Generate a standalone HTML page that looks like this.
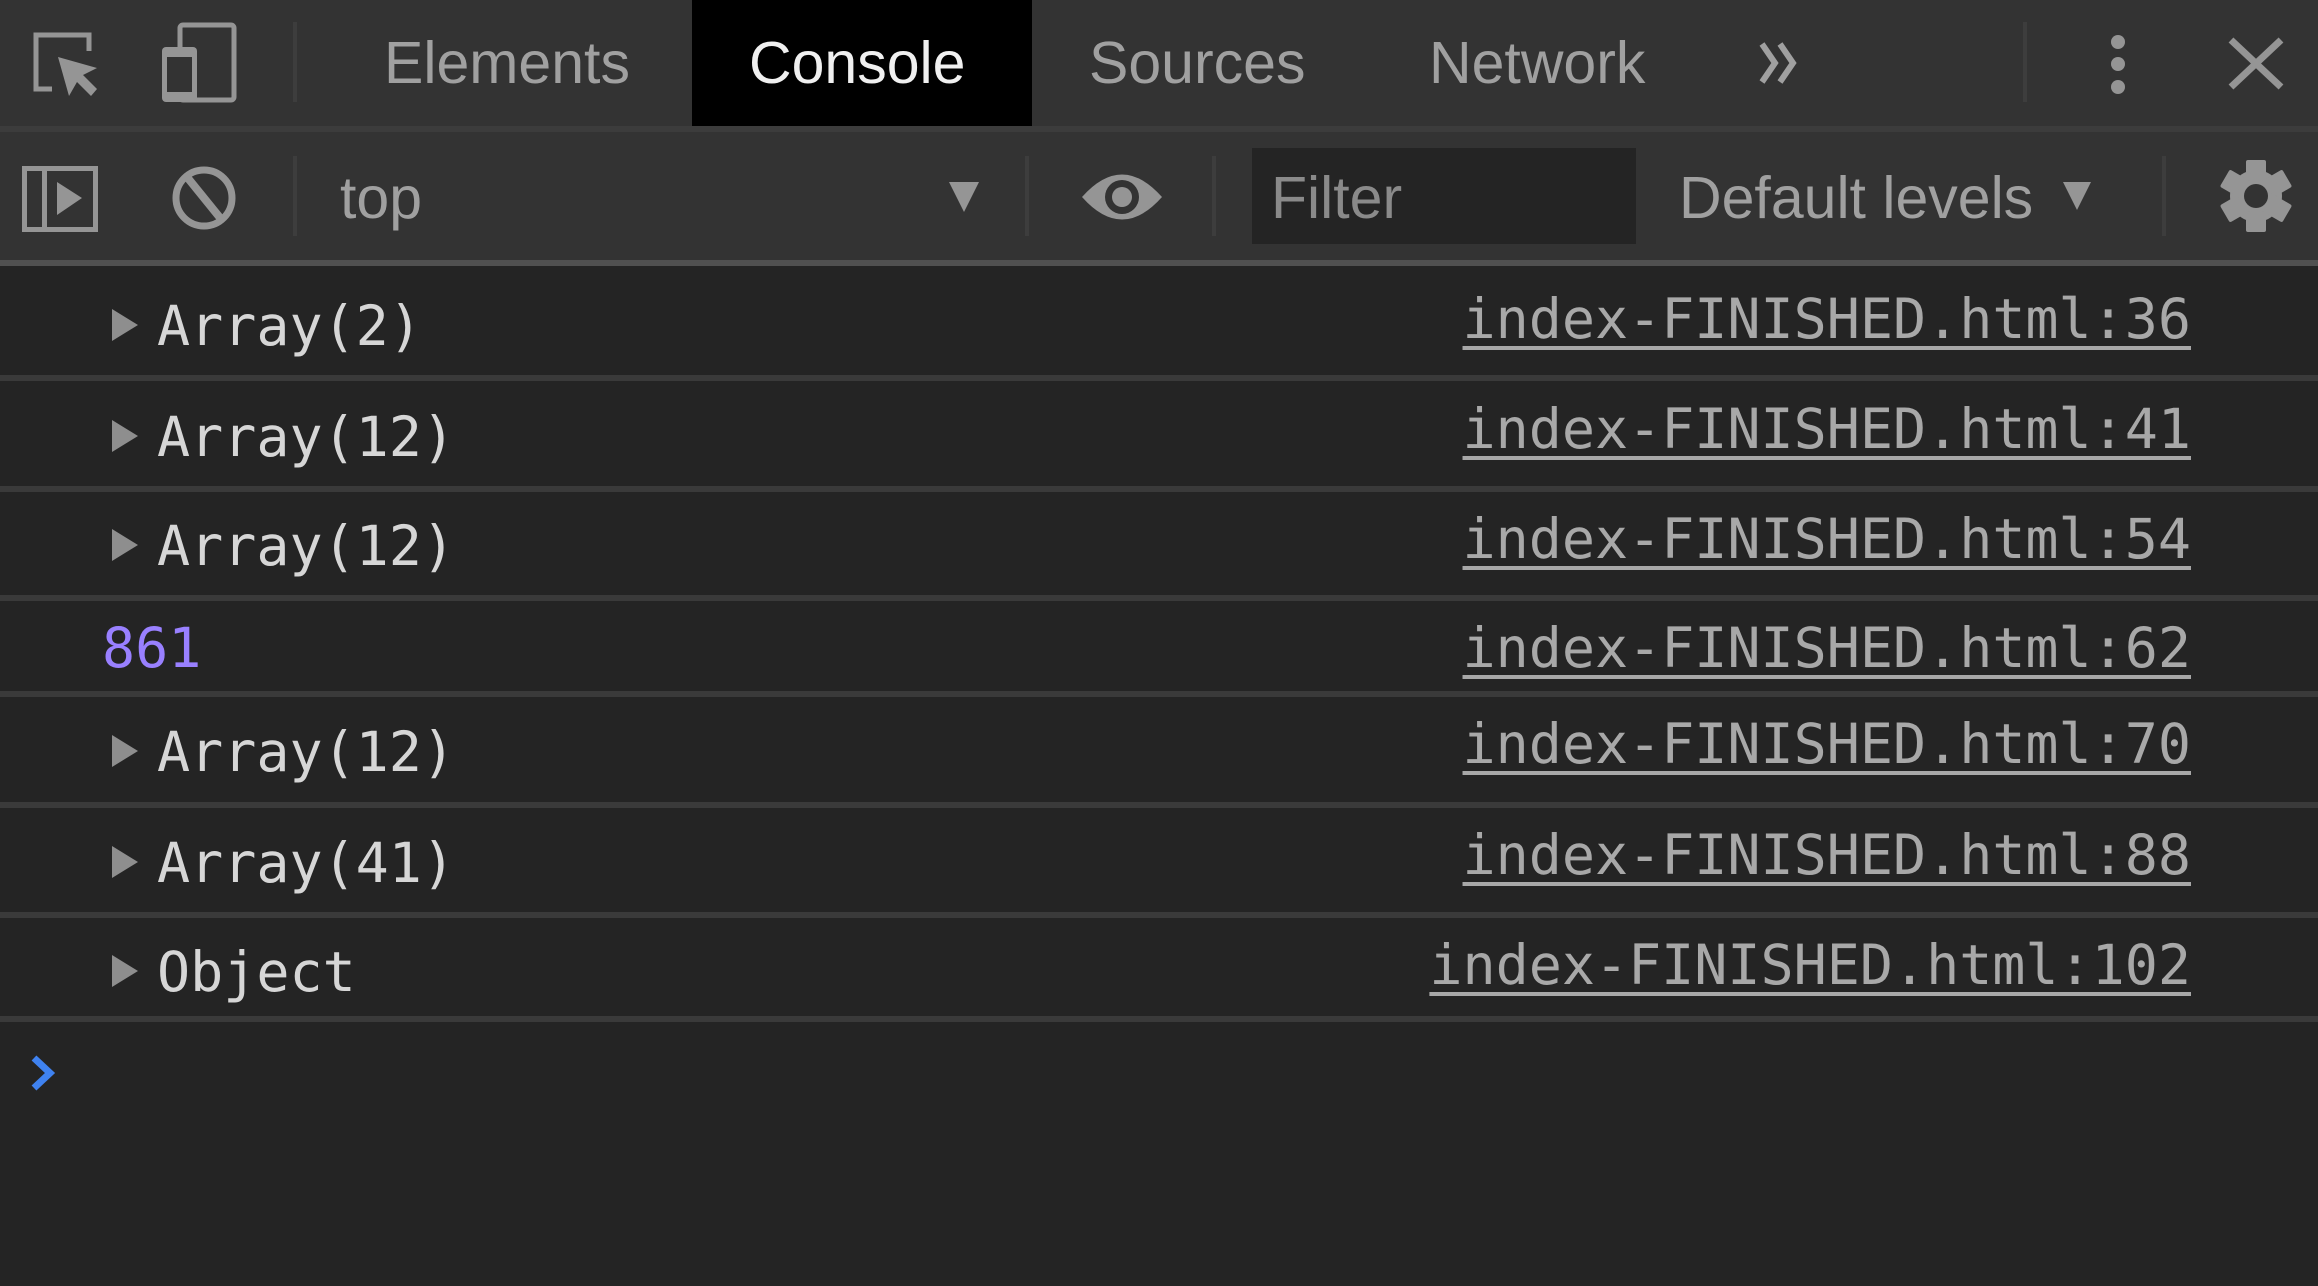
<!DOCTYPE html>
<html><head><meta charset="utf-8"><style>
html,body{margin:0;padding:0}
body{width:2318px;height:1286px;background:#242424;position:relative;overflow:hidden;font-family:"Liberation Sans",sans-serif}
.a{position:absolute;white-space:nowrap}
.tab{font-size:59px;color:#a0a0a0;top:28px;line-height:70px}
.mono{font-family:"DejaVu Sans Mono","Liberation Mono",monospace;font-size:55px;line-height:60px}
.row{color:#d6d6d6;left:157px}
.lnk{color:#a8a8a8;text-decoration:underline;text-decoration-thickness:4px;text-underline-offset:8px;right:127px}
.sep{position:absolute;left:0;width:2318px;height:6px;background:#3a3a3a}
.tri{position:absolute;left:112px;width:0;height:0;border-top:16px solid transparent;border-bottom:16px solid transparent;border-left:26px solid #8e8e8e}
</style></head><body>
<div class="a" style="left:0;top:0;width:2318px;height:126px;background:#333"></div>
<div class="a" style="left:692px;top:0;width:340px;height:126px;background:#000"></div>
<div class="a" style="left:0;top:126px;width:2318px;height:6px;background:#3c3c3c"></div>
<div class="a" style="left:0;top:132px;width:2318px;height:128px;background:#333"></div>
<div class="a" style="left:0;top:260px;width:2318px;height:6px;background:#505050"></div>
<div class="a" style="left:1252px;top:148px;width:384px;height:96px;background:#242424"></div>

<div class="a tab" style="left:384px">Elements</div>
<div class="a tab" style="left:749px;color:#f0f0f0">Console</div>
<div class="a tab" style="left:1089px">Sources</div>
<div class="a tab" style="left:1429px">Network</div>
<div class="a tab" style="left:340px;top:163px">top</div>
<div class="a tab" style="left:1271px;top:163px;color:#8a8a8a">Filter</div>
<div class="a tab" style="left:1679px;top:163px">Default levels</div>

<svg class="a" style="left:0;top:0" width="2318" height="1286" viewBox="0 0 2318 1286">
 <g fill="none" stroke="#959595" stroke-width="5">
  <path d="M52 89H36V35h53v16"/>
  <rect x="180" y="25" width="54" height="75" rx="3"/>
  <rect x="24.5" y="168.5" width="71" height="61"/>
 </g>
 <circle cx="204" cy="198" r="28" fill="none" stroke="#959595" stroke-width="7"/>
 <path d="M187 177L221 219" stroke="#959595" stroke-width="8"/>
 <path d="M58 57L97 68L83 75L97 89L91 96L77 82L69 96Z" fill="#959595"/>
 <rect x="162" y="47" width="35" height="55" rx="4" fill="#959595"/>
 <rect x="167" y="57" width="25" height="35" fill="#333"/>
 <rect x="42" y="168" width="5" height="62" fill="#959595"/>
 <path d="M57 182L82 198L57 215Z" fill="#959595"/>
 <g fill="#3d3d3d"><rect x="293" y="22" width="4" height="80"/><rect x="2023" y="22" width="4" height="80"/>
 <rect x="293" y="156" width="4" height="80"/><rect x="1025" y="156" width="4" height="80"/><rect x="1212" y="156" width="4" height="80"/><rect x="2162" y="156" width="4" height="80"/></g>
 <path d="M1762 44l13 19l-13 19M1780 44l13 19l-13 19" fill="none" stroke="#a0a0a0" stroke-width="6"/>
 <g fill="#959595"><ellipse cx="2118" cy="42" rx="7" ry="7"/><ellipse cx="2118" cy="64" rx="7" ry="7"/><ellipse cx="2118" cy="87" rx="7" ry="7"/></g>
 <path d="M2231 40L2281 87M2281 40L2231 87" stroke="#959595" stroke-width="7"/>
 <path d="M949 182h30l-15 30z" fill="#959595"/>
 <path d="M2063 182h28l-14 28z" fill="#959595"/>
 <path d="M1082 197q40-45 80 0q-40 45-80 0z" fill="#959595"/>
 <circle cx="1122" cy="197" r="17" fill="#333"/><circle cx="1122" cy="197" r="10" fill="#959595"/>
 <g transform="translate(2256 196)">
  <g fill="#959595">
   <circle r="26"/>
   <rect x="-10" y="-36" width="20" height="72" rx="2"/>
   <rect x="-10" y="-36" width="20" height="72" rx="2" transform="rotate(60)"/>
   <rect x="-10" y="-36" width="20" height="72" rx="2" transform="rotate(-60)"/>
  </g>
  <circle r="12" fill="#333"/>
 </g>
 <path d="M34 1058L50 1073L34 1088" fill="none" stroke="#3f82f0" stroke-width="7"/>
</svg>

<div class="sep" style="top:375px"></div>
<div class="sep" style="top:486px"></div>
<div class="sep" style="top:595px"></div>
<div class="sep" style="top:691px"></div>
<div class="sep" style="top:802px"></div>
<div class="sep" style="top:912px"></div>
<div class="sep" style="top:1016px"></div>

<div class="tri" style="top:309px"></div><div class="a mono row" style="top:296px">Array(2)</div>
<div class="tri" style="top:420px"></div><div class="a mono row" style="top:407px">Array(12)</div>
<div class="tri" style="top:529px"></div><div class="a mono row" style="top:516px">Array(12)</div>
<div class="a mono" style="left:102px;top:618px;color:#9980ff">861</div>
<div class="tri" style="top:735px"></div><div class="a mono row" style="top:722px">Array(12)</div>
<div class="tri" style="top:846px"></div><div class="a mono row" style="top:833px">Array(41)</div>
<div class="tri" style="top:955px"></div><div class="a mono row" style="top:942px">Object</div>

<div class="a mono lnk" style="top:289px">index-FINISHED.html:36</div>
<div class="a mono lnk" style="top:399px">index-FINISHED.html:41</div>
<div class="a mono lnk" style="top:509px">index-FINISHED.html:54</div>
<div class="a mono lnk" style="top:618px">index-FINISHED.html:62</div>
<div class="a mono lnk" style="top:714px">index-FINISHED.html:70</div>
<div class="a mono lnk" style="top:825px">index-FINISHED.html:88</div>
<div class="a mono lnk" style="top:935px">index-FINISHED.html:102</div>
</body></html>
